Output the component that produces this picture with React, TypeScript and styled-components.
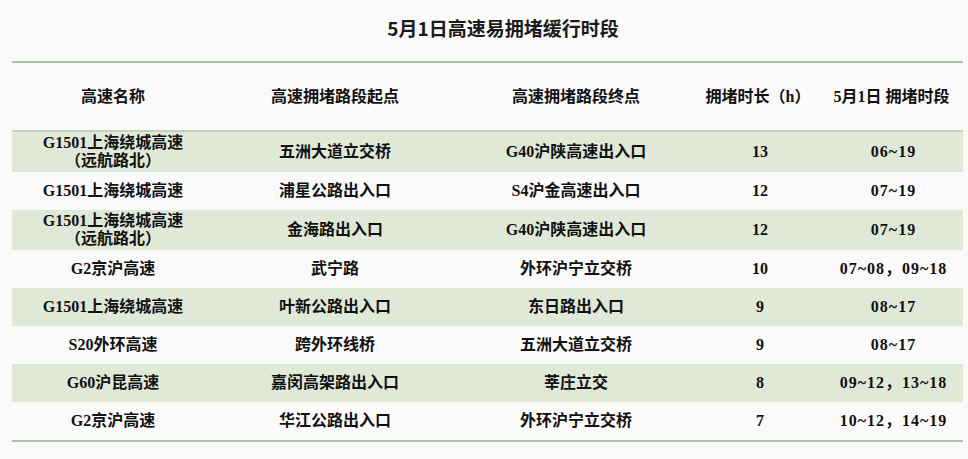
import React from "react";
import styled, { createGlobalStyle } from "styled-components";

const Global = createGlobalStyle`
  html, body { margin: 0; padding: 0; background: #fafafa; }
  body { font-family: "Liberation Serif", "Noto Sans CJK SC", serif; }
`;

const Page = styled.div`
  width: 968px;
  height: 459px;
  padding-top: 14px;
  box-sizing: border-box;
  background: #fafafa;
`;

const Title = styled.h1`
  margin: 0;
  padding-left: 38px;
  height: 47px;
  line-height: 28px;
  text-align: center;
  font-family: "Noto Sans CJK SC", "Liberation Sans", sans-serif;
  font-size: 19px;
  font-weight: 700;
  color: #1a1a1a;
`;

const Table = styled.div`
  margin-left: 12px;
  width: 951px;
  border-top: 2px solid #adc0a3;
  border-bottom: 2px solid #adc0a3;
`;

const COLS = "202px 242px 240px 124px 143px";

const HeaderRow = styled.div`
  display: grid;
  grid-template-columns: ${COLS};
  align-items: center;
  height: 67px;
  border-bottom: 2px solid #c4d2bc;
`;

const Row = styled.div<{ $shaded: boolean }>`
  display: grid;
  grid-template-columns: ${COLS};
  align-items: center;
  min-height: 38px;
  padding: 2px 0;
  box-sizing: border-box;
  background: ${(p) => (p.$shaded ? "#e0e9d8" : "#fafafa")};
`;

const Cell = styled.div<{ $shift?: number; $spaced?: boolean }>`
  text-align: center;
  font-family: "Liberation Serif", "Noto Sans CJK SC", serif;
  font-weight: 700;
  font-size: 16px;
  line-height: 18px;
  color: #111;
  padding-left: ${(p) => p.$shift ?? 0}px;
  letter-spacing: ${(p) => (p.$spaced ? "1px" : "0")};
`;

const HeadCell = styled(Cell)`
  line-height: 20px;
`;

type R = [string[], string, string, string, string];

const rows: R[] = [
  [["G1501上海绕城高速", "（远航路北）"], "五洲大道立交桥", "G40沪陕高速出入口", "13", "06~19"],
  [["G1501上海绕城高速"], "浦星公路出入口", "S4沪金高速出入口", "12", "07~19"],
  [["G1501上海绕城高速", "（远航路北）"], "金海路出入口", "G40沪陕高速出入口", "12", "07~19"],
  [["G2京沪高速"], "武宁路", "外环沪宁立交桥", "10", "07~08，09~18"],
  [["G1501上海绕城高速"], "叶新公路出入口", "东日路出入口", "9", "08~17"],
  [["S20外环高速"], "跨外环线桥", "五洲大道立交桥", "9", "08~17"],
  [["G60沪昆高速"], "嘉闵高架路出入口", "莘庄立交", "8", "09~12，13~18"],
  [["G2京沪高速"], "华江公路出入口", "外环沪宁立交桥", "7", "10~12，14~19"],
];

export default function App() {
  return (
    <>
      <Global />
      <Page>
        <Title>5月1日高速易拥堵缓行时段</Title>
        <Table>
          <HeaderRow>
            <HeadCell>高速名称</HeadCell>
            <HeadCell>高速拥堵路段起点</HeadCell>
            <HeadCell>高速拥堵路段终点</HeadCell>
            <HeadCell>拥堵时长（h）</HeadCell>
            <HeadCell>5月1日 拥堵时段</HeadCell>
          </HeaderRow>
          {rows.map((r, i) => (
            <Row key={i} $shaded={i % 2 === 0}>
              <Cell>
                {r[0].map((l, j) => (
                  <div key={j}>{l}</div>
                ))}
              </Cell>
              <Cell>{r[1]}</Cell>
              <Cell>{r[2]}</Cell>
              <Cell $shift={4}>{r[3]}</Cell>
              <Cell $shift={4} $spaced>
                {r[4]}
              </Cell>
            </Row>
          ))}
        </Table>
      </Page>
    </>
  );
}
